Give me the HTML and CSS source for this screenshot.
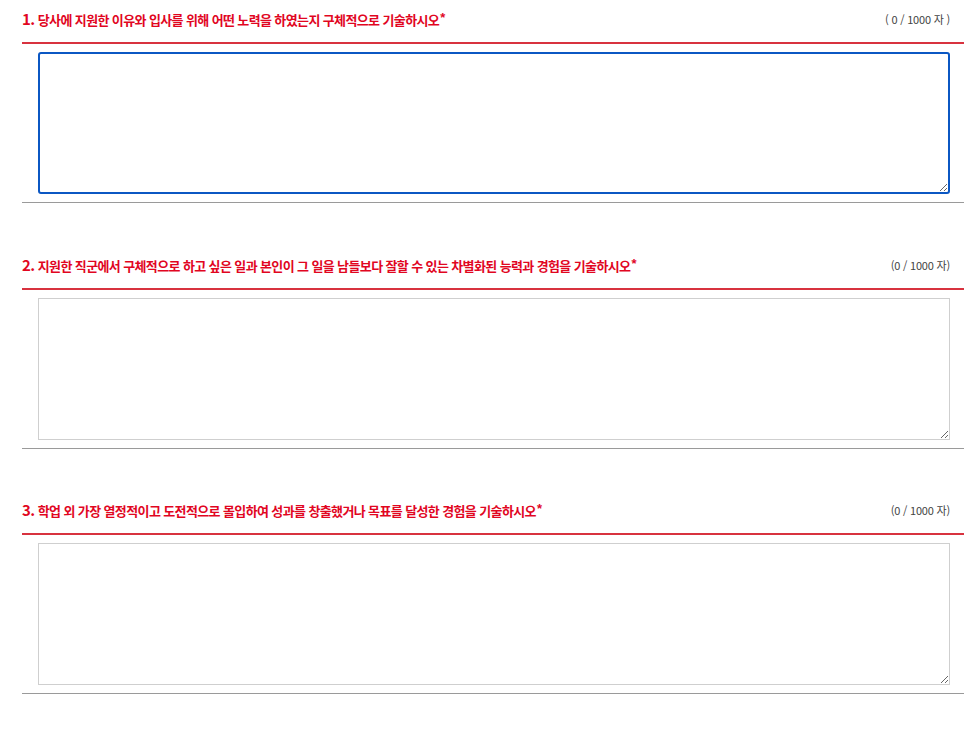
FILE: index.html
```html
<!DOCTYPE html>
<html lang="ko">
<head>
<meta charset="utf-8">
<title>자기소개서</title>
<link rel="stylesheet" href="styles.css">
</head>
<body>
<div class="form">
  <section class="q">
    <div class="q-head">
      <h3 class="q-title"><span class="q-num">1.</span> 당사에 지원한 이유와 입사를 위해 어떤 노력을 하였는지 구체적으로 기술하시오<span class="req">*</span></h3>
      <span class="q-count">( 0 / 1000 자 )</span>
    </div>
    <div class="q-body">
      <textarea class="q-input is-focused"></textarea>
    </div>
  </section>
  <section class="q">
    <div class="q-head">
      <h3 class="q-title"><span class="q-num">2.</span> 지원한 직군에서 구체적으로 하고 싶은 일과 본인이 그 일을 남들보다 잘할 수 있는 차별화된 능력과 경험을 기술하시오<span class="req">*</span></h3>
      <span class="q-count">(0 / 1000 자)</span>
    </div>
    <div class="q-body">
      <textarea class="q-input"></textarea>
    </div>
  </section>
  <section class="q">
    <div class="q-head">
      <h3 class="q-title"><span class="q-num">3.</span> 학업 외 가장 열정적이고 도전적으로 몰입하여 성과를 창출했거나 목표를 달성한 경험을 기술하시오<span class="req">*</span></h3>
      <span class="q-count">(0 / 1000 자)</span>
    </div>
    <div class="q-body">
      <textarea class="q-input"></textarea>
    </div>
  </section>
</div>
</body>
</html>
```
FILE: styles.css
```css
html, body {
  margin: 0;
  padding: 0;
  background: #fff;
}
body {
  font-family: "Noto Sans CJK KR", "Noto Sans", sans-serif;
}
.form {
  margin: 0 7px 0 22px;
}
.q + .q {
  margin-top: 43px;
}
.q:last-child {
  margin-top: 42px;
}
.q-head {
  display: flex;
  align-items: center;
  justify-content: space-between;
  height: 42px;
  border-bottom: 2px solid #d8323f;
  box-sizing: content-box;
}
.q-title {
  margin: 0;
  font-size: 13px;
  font-weight: 700;
  color: #e1061f;
  letter-spacing: -0.62px;
  line-height: 20px;
  padding-bottom: 4px;
}
.q-num {
  font-size: 15px;
  letter-spacing: -0.5px;
}
.req {
  font-family: "Liberation Sans", sans-serif;
  font-size: 13px;
  font-weight: 700;
  margin-left: 1px;
  vertical-align: 3px;
  line-height: 0;
}
.q-count {
  font-size: 11px;
  color: #444;
  letter-spacing: -0.2px;
  margin-right: 14px;
  padding-bottom: 4px;
}
.q-body {
  padding: 8px 14px 8px 16px;
  border-bottom: 1px solid #9a9a9a;
}
.q-input {
  display: block;
  width: 100%;
  height: 142px;
  box-sizing: border-box;
  border: 1px solid #cfcfcf;
  border-radius: 0;
  margin: 0;
  padding: 6px 8px;
  resize: vertical;
  font-family: inherit;
  outline: none;
}
.q-input.is-focused {
  border: 2px solid #0b57c3;
  border-radius: 3px;
}
```
